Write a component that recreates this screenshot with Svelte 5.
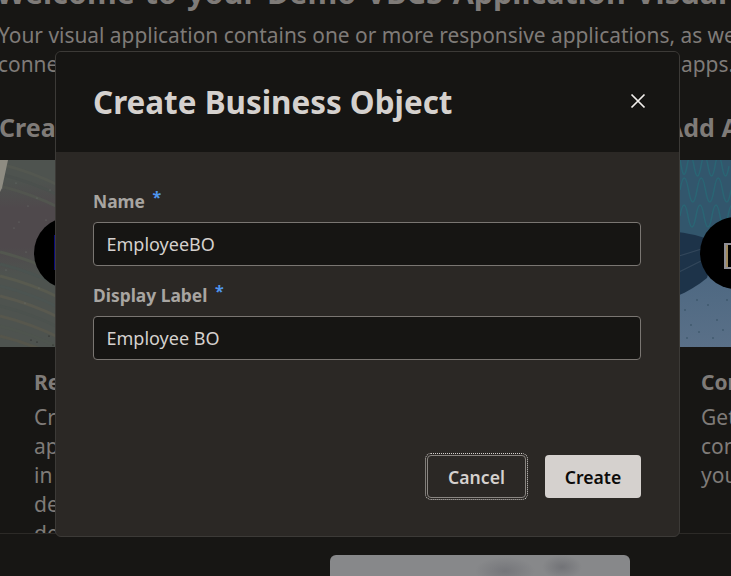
<script>
	// background page sits under the modal, dimmed
	const cards = [
		{ heading: 'Create', title: 'Responsive Apps', lines: ['Create web', 'apps that run', 'in any browser', 'designed with', 'developer tools'], art: 'earth' },
		{ heading: 'Extend', title: 'Service Data', lines: ['Use the data', 'from services'], art: 'none' },
		{ heading: 'Add Apps', title: 'Connections', lines: ['Get', 'connected to', 'your data'], art: 'wave' }
	];

	// diagonal streaks for the left picture
	const streaks = [
		[4, '#535750'], [14, '#4b504d'], [26, '#52554f'], [92, '#53574f'], [104, '#4b5350'], [116, '#585a4f'],
		[126, '#4c5451'], [136, '#59594f'], [146, '#4c524e'], [156, '#57574d'], [166, '#4e544e'], [176, '#55554b']
	];
	const specks = [
		[2, 28], [16, 23], [19, 62], [14, 68], [28, 46], [37, 38], [46, 60], [26, 92], [39, 128], [49, 176],
		[53, 185], [37, 182], [31, 180], [25, 143], [50, 30], [6, 110]
	];
	const dots = [
		[18, 150], [24, 165], [32, 172], [41, 145], [50, 160], [60, 140], [20, 178], [46, 178], [56, 170], [30, 140]
	];
</script>

<div class="page">
	<div class="backdrop">
		<h1>Welcome to your Demo VBCS Application Visual Builder</h1>
		<p class="lead">Your visual application contains one or more responsive applications, as well as<br /><span class="lead-pad">connections to services and data that you can share between your </span>apps.</p>

		<div class="cols">
			{#each cards as card}
				<section class="col">
					<h2>{card.heading}</h2>
					<div class="card">
						<div class="art">
							{#if card.art === 'earth'}
								<svg viewBox="0 0 326 187" aria-hidden="true">
									<defs>
										<linearGradient id="band" x1="0" y1="0" x2="0" y2="1">
											<stop offset="0" stop-color="#4e534f" />
											<stop offset="0.3" stop-color="#4f494c" />
											<stop offset="0.7" stop-color="#4f494c" />
											<stop offset="1" stop-color="#4e534f" />
										</linearGradient>
									</defs>
									<rect width="326" height="187" fill="#4e534f" />
									<rect y="20" width="326" height="95" fill="url(#band)" />
									{#each streaks as [y, c]}
										<path d="M0 {y} C20 {y + 5} 40 {y + 12} 60 {y + 22}" stroke={c} stroke-width="3" fill="none" />
									{/each}
									{#each specks as [x, y]}
										<circle cx={x} cy={y} r="0.6" fill={y > 170 ? '#1c1c1a' : '#6f7470'} />
									{/each}
									<path d="M0 0 L8 0 L2 28 L0 32 Z" fill="#8e8c82" />
								</svg>
								<div class="badge left"><i class="edge"></i></div>
							{:else if card.art === 'wave'}
								<svg viewBox="0 0 326 187" aria-hidden="true">
									<defs>
										<linearGradient id="floor" x1="0" y1="0" x2="0" y2="1">
											<stop offset="0" stop-color="#3a5c78" />
											<stop offset="1" stop-color="#5a7088" />
										</linearGradient>
									</defs>
									<rect width="326" height="187" fill="url(#floor)" />
									<rect width="326" height="80" fill="#32566c" />
									<g fill="none" stroke="#2a6574" stroke-width="1.5">
										<path d="M13 -2 q3.5 28 7 8 t7 0 t7 0 t7 0 t7 0 t7 0 t7 0" />
										<path d="M13 30 q4.2 -24 8.5 0 t8.5 0 t8.5 0 t8.5 0 t8.5 0 t8.5 0" />
										<path d="M13 56 q4 -22 8 0 t8 0 t8 0 t8 0 t8 0 t8 0 t8 0" />
									</g>
									<path d="M10 72 C28 74 40 78 50 84 L40 118 C30 126 20 132 10 136 Z" fill="#1d3349" />
									<path d="M12 96 L44 86 M12 112 L40 98" stroke="#33475b" stroke-width="1.2" />
									{#each dots as [x, y]}
										<circle cx={x} cy={y} r="0.7" fill="#2c4658" />
									{/each}
								</svg>
								<div class="badge right"><i class="glyph"></i></div>
							{/if}
						</div>
						<div class="text">
							<h3>{card.title}</h3>
							{#each card.lines as line}
								<p>{line}</p>
							{/each}
						</div>
					</div>
				</section>
			{/each}
		</div>

		<div class="lower"><div class="photo"></div></div>
	</div>

	<div class="dialog" role="dialog" aria-label="Create Business Object">
		<header>
			<h4>Create Business Object</h4>
			<button class="close" aria-label="Close">
				<svg viewBox="0 0 16 16" width="16" height="16"><path d="M1.5 1.5 L14.5 14.5 M14.5 1.5 L1.5 14.5" stroke="#f2efec" stroke-width="1.7" fill="none" /></svg>
			</button>
		</header>
		<div class="body">
			<label for="bo-name">Name <sup>*</sup></label>
			<input id="bo-name" value="EmployeeBO" />
			<label for="bo-label">Display Label <sup>*</sup></label>
			<input id="bo-label" value="Employee BO" />
			<div class="actions">
				<button class="btn cancel">Cancel</button>
				<button class="btn create">Create</button>
			</div>
		</div>
	</div>
</div>

<style>
	:global(body) {
		margin: 0;
		background: #161513;
		font-family: "Noto Sans", "Open Sans", sans-serif;
	}
	.page {
		position: relative;
		width: 731px;
		height: 576px;
		overflow: hidden;
		background: #171614;
	}
	.backdrop {
		width: 1040px;
		margin-top: -27px;
		color: #7f7b78;
	}
	h1 {
		margin: 0 0 0 -4px;
		font-size: 30.5px;
		line-height: 38px;
		font-weight: 700;
		word-spacing: 2px;
		white-space: nowrap;
	}
	.lead {
		margin: 10px 0 0 -2px;
		font-size: 20.9px;
		line-height: 29px;
		white-space: nowrap;
	}
	.lead-pad { display: inline-block; width: 683px; overflow: hidden; vertical-align: bottom; }
	.cols {
		display: grid;
		grid-template-columns: repeat(3, 326px);
		column-gap: 7.5px;
		margin-top: 30px;
	}
	h2 {
		margin: 0 0 15px -1px;
		font-size: 25px;
		line-height: 36px;
		font-weight: 700;
		white-space: nowrap;
	}
	.card {
		height: 373px;
		overflow: hidden;
		border-bottom: 1px solid #2c2a27;
	}
	.art {
		position: relative;
		height: 187px;
		overflow: hidden;
	}
	.art svg { display: block; width: 326px; height: 187px; }
	.badge {
		position: absolute;
		top: 57px;
		width: 72px;
		height: 72px;
		border-radius: 50%;
		background: #000;
	}
	.badge.left { left: 34px; }
	.badge.right { left: 33px; }
	.edge {
		position: absolute;
		left: 20px;
		top: 18px;
		width: 1px;
		height: 35px;
		background: #0a0a7a;
	}
	.glyph {
		position: absolute;
		left: 24px;
		top: 26px;
		width: 22px;
		height: 22px;
		border: 2px solid #8f8f96;
		background: #000;
		box-shadow: inset 2px 0 0 #a08a5e;
	}
	.text { padding: 21px 20px 0 34px; }
	h3 {
		margin: 0 0 7px;
		font-size: 21px;
		line-height: 28px;
		font-weight: 700;
		white-space: nowrap;
	}
	.text p {
		margin: 0;
		font-size: 21px;
		line-height: 29px;
		white-space: nowrap;
	}
	.lower { padding: 21px 0 0 330px; }
	.photo {
		width: 300px;
		height: 60px;
		border-radius: 6px 6px 0 0;
		background:
			radial-gradient(ellipse 30px 14px at 175px 16px, #75767a, transparent),
			radial-gradient(ellipse 20px 12px at 232px 12px, #727377, transparent),
			#87888a;
	}

	.dialog {
		position: absolute;
		left: 55px;
		top: 51px;
		width: 625px;
		height: 486px;
		box-sizing: border-box;
		border: 1px solid #3c3a37;
		border-radius: 6px;
		background: #2b2825;
		overflow: hidden;
	}
	header {
		display: flex;
		align-items: center;
		justify-content: space-between;
		height: 100px;
		padding: 0 33px 2px 37px;
		box-sizing: border-box;
		background: #161513;
	}
	h4 {
		margin: 0;
		font-size: 31.4px;
		font-weight: 700;
		color: #d5d1ce;
		white-space: nowrap;
	}
	.close {
		display: flex;
		padding: 0;
		border: 0;
		background: none;
	}
	.body {
		display: flex;
		flex-direction: column;
		padding: 0 38px 0 37px;
	}
	label {
		display: block;
		height: 33px;
		margin-top: 37px;
		font-size: 17.4px;
		line-height: 24px;
		font-weight: 700;
		color: #a8a5a1;
	}
	input + label { margin-top: 17px; height: 33px; }
	sup {
		font-size: 16px;
		line-height: 0;
		font-weight: 700;
		color: #4f96ee;
		vertical-align: 5px;
		margin-left: 3px;
	}
	input {
		box-sizing: border-box;
		width: 548px;
		height: 44px;
		padding: 0 12.5px;
		border: 1px solid #7a7672;
		border-radius: 4px;
		background: #161513;
		color: #d5d1ce;
		font: 400 18px "Noto Sans", sans-serif;
	}
	.actions {
		display: flex;
		justify-content: flex-end;
		gap: 19px;
		margin-top: 95px;
	}
	.btn {
		height: 43px;
		border-radius: 4px;
		font: 600 17.6px "Noto Sans", sans-serif;
	}
	.cancel {
		width: 99px;
		background: none;
		border: 1px solid #8a8682;
		color: #d5d1ce;
		outline: 1px dotted #d5d1ce;
		outline-offset: 1px;
	}
	.create {
		width: 96px;
		border: 0;
		background: #d5d1ce;
		color: #0c0b0a;
	}
</style>
